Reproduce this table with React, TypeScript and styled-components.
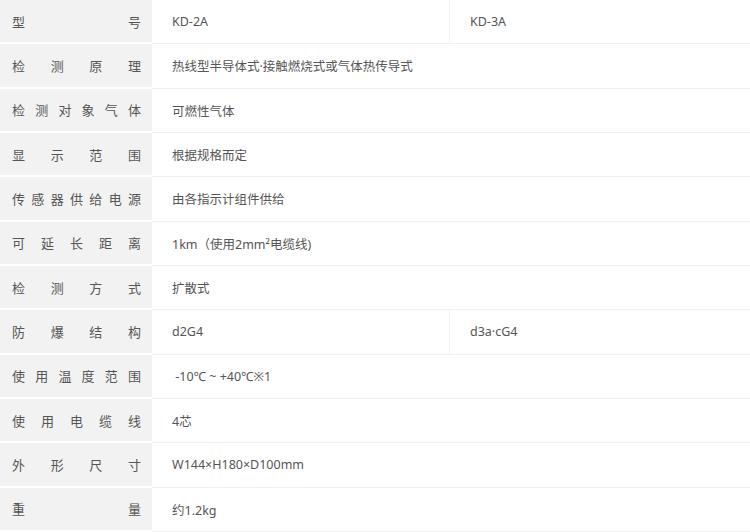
import React from 'react'
import styled, { createGlobalStyle } from 'styled-components'

const GlobalStyle = createGlobalStyle`
  html, body {
    margin: 0;
    padding: 0;
    background: #fff;
  }
  body {
    font-family: "Noto Sans", "Noto Sans CJK SC", sans-serif;
  }
`

const SpecTable = styled.div`
  width: 750px;
  height: 532px;
  display: grid;
  grid-template-columns: 152px 298px 300px;
  grid-template-rows: repeat(12, 1fr);
`

const LabelCell = styled.div`
  background: #f2f2f2;
  border-bottom: 2px solid #fff;
  padding: 0 11px 0 12px;
  display: flex;
  align-items: center;
  justify-content: space-between;
  color: #555;
  font-size: 13px;
`

const ValueCell = styled.div<{ $span?: boolean; $divider?: boolean }>`
  grid-column: ${(p) => (p.$span ? 'span 2' : 'span 1')};
  border-bottom: 1px solid #f0f0f0;
  border-right: ${(p) => (p.$divider ? '1px solid #f3f3f3' : 'none')};
  padding-left: 20px;
  display: flex;
  align-items: center;
  color: #555;
  font-size: 12.5px;
  white-space: pre;
`

type Row = { label: string; values: string[] }

const rows: Row[] = [
  { label: '型号', values: ['KD-2A', 'KD-3A'] },
  { label: '检测原理', values: ['热线型半导体式·接触燃烧式或气体热传导式'] },
  { label: '检测对象气体', values: ['可燃性气体'] },
  { label: '显示范围', values: ['根据规格而定'] },
  { label: '传感器供给电源', values: ['由各指示计组件供给'] },
  { label: '可延长距离', values: ['1km（使用2mm²电缆线)'] },
  { label: '检测方式', values: ['扩散式'] },
  { label: '防爆结构', values: ['d2G4', 'd3a·cG4'] },
  { label: '使用温度范围', values: [' -10℃ ~ +40℃※1'] },
  { label: '使用电缆线', values: ['4芯'] },
  { label: '外形尺寸', values: ['W144×H180×D100mm'] },
  { label: '重量', values: ['约1.2kg'] },
]

const App = () => (
  <>
    <GlobalStyle />
    <SpecTable>
      {rows.map((row) => (
        <React.Fragment key={row.label}>
          <LabelCell>
            {row.label.split('').map((ch, i) => (
              <span key={i}>{ch}</span>
            ))}
          </LabelCell>
          {row.values.length === 1 ? (
            <ValueCell $span>{row.values[0]}</ValueCell>
          ) : (
            row.values.map((v, i) => (
              <ValueCell key={v} $divider={i === 0}>
                {v}
              </ValueCell>
            ))
          )}
        </React.Fragment>
      ))}
    </SpecTable>
  </>
)

export default App
